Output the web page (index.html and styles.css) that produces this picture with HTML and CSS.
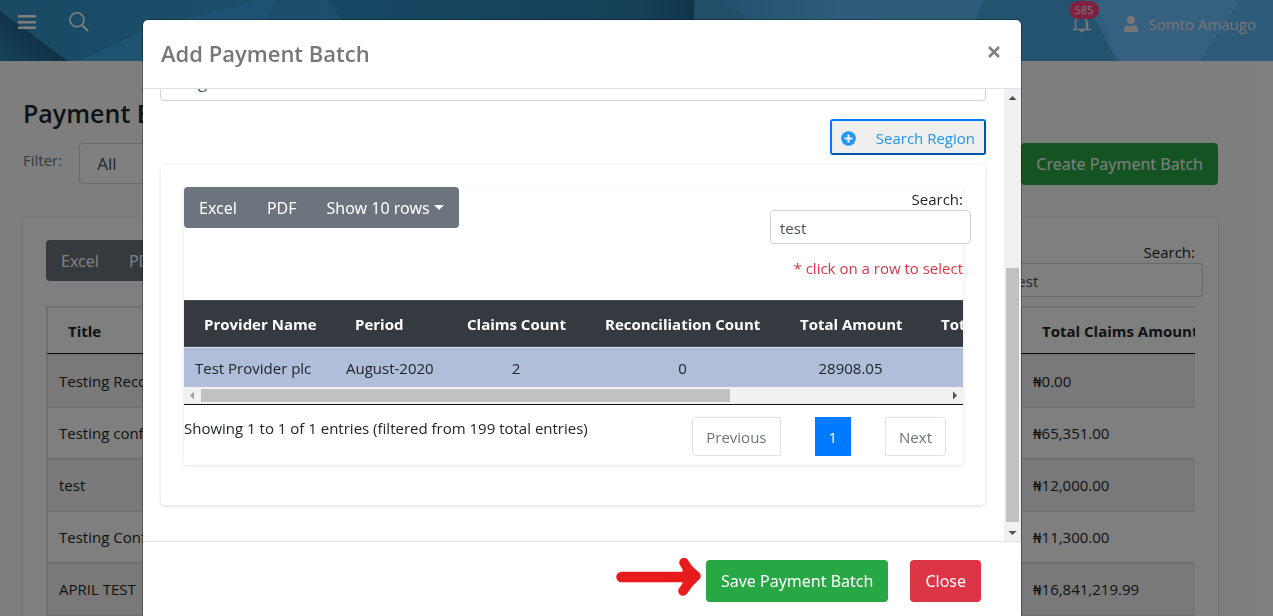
FILE: index.html
```html
<!DOCTYPE html>
<html lang="en">
<head>
<meta charset="utf-8">
<title>Payment Batch</title>
<link rel="stylesheet" href="styles.css">
</head>
<body>
<div class="page">
  <header class="topbar">
    <svg class="topbar-art" viewBox="0 0 1273 61" preserveAspectRatio="none" aria-hidden="true">
      <defs>
        <linearGradient id="base" x1="0" x2="1" y1="0" y2="0">
          <stop offset="0" stop-color="#3494c8"/><stop offset=".3" stop-color="#3aa2dc"/>
        </linearGradient>
        <linearGradient id="deep" x1="0" x2="1" y1="0" y2="0">
          <stop offset="0" stop-color="#308ec8"/><stop offset=".85" stop-color="#2a80b0"/><stop offset="1" stop-color="#226c98"/>
        </linearGradient>
        <linearGradient id="right" x1="0" x2="1" y1="0" y2="0">
          <stop offset="0" stop-color="#3f9cd8"/><stop offset=".25" stop-color="#5eb8f4"/><stop offset="1" stop-color="#62bcfa"/>
        </linearGradient>
        <linearGradient id="fold" gradientUnits="userSpaceOnUse" x1="10" y1="61" x2="36" y2="32">
          <stop offset="0" stop-color="#2a80b0"/><stop offset="1" stop-color="#22648c"/>
        </linearGradient>
      </defs>
      <rect width="1273" height="61" fill="url(#base)"/>
      <path d="M0 11L68 61H0z" fill="url(#fold)"/>
      <path d="M78 61L150 28 260 0H275L248 61z" fill="#3ba6e0"/>
      <path d="M328 0H695L693 61H371z" fill="url(#deep)"/>
      <path d="M695 0H1273V61H693z" fill="url(#right)"/>
      <path d="M720 0L765 30V61H693L695 0z" fill="#479fd6"/>
      <path d="M984 0H1085L1117 61H958z" fill="#48a6e0"/>
      <path d="M1095 0H1240L1199 61H1117z" fill="#6cc0ff"/>
      <path d="M1240 0H1273V61H1199z" fill="#5cb6f2"/>
    </svg>
    <div class="topbar-side">
      <button class="icon-btn" aria-label="Menu">
        <svg width="18" height="14" viewBox="0 0 18 14"><path d="M0 1.3h18M0 7.3h18M0 12.8h18" stroke="currentColor" stroke-width="2.4"/></svg>
      </button>
      <button class="icon-btn" aria-label="Search">
        <svg width="20" height="20" viewBox="0 0 20 20" fill="none" stroke="currentColor"><circle cx="8" cy="7.8" r="7" stroke-width="1.6"/><path d="M13 13l6 6" stroke-width="2"/></svg>
      </button>
    </div>
    <div class="topbar-side topbar-user">
      <button class="icon-btn bell" aria-label="Notifications">
        <svg width="18" height="20" viewBox="0 0 18 20"><path d="M0 15.500h18M2.500 15V8a5.500 5.500 0 0 1 11 0v7M14.500 15V8" fill="none" stroke="currentColor" stroke-width="1.5"/><path d="M6 16h6l-3 2.500z" fill="currentColor"/></svg>
        <span class="badge">585</span>
      </button>
      <a class="user" href="#">
        <svg width="14" height="16" viewBox="0 0 14 16" fill="currentColor"><circle cx="7" cy="4" r="4"/><path d="M0 16v-2.500A4.200 4.200 0 0 1 4 9.300Q7 10.300 10 9.300A4.200 4.200 0 0 1 14 13.500V16z"/></svg>
        Somto Amaugo
      </a>
    </div>
  </header>

  <main class="main">
    <h1>Payment Batch</h1>
    <div class="filter-row">
      <label for="filter">Filter:</label>
      <select id="filter" class="select filter-select"><option>All</option></select>
      <button class="btn btn-green create">Create Payment Batch</button>
    </div>
    <section class="card list-card">
      <div class="tools">
        <div class="btn-group"><button>Excel</button><button>PDF</button></div>
        <div class="search"><label for="list-search">Search:</label><input id="list-search" type="text" value="test"></div>
      </div>
      <div class="clip">
        <table class="list">
          <colgroup><col class="w-title"><col><col class="w-total"></colgroup>
          <thead><tr><th>Title</th><th></th><th>Total Claims Amount</th></tr></thead>
          <tbody>
            <tr><td>Testing Reco</td><td></td><td>₦0.00</td></tr>
            <tr><td>Testing conf</td><td></td><td>₦65,351.00</td></tr>
            <tr><td>test</td><td></td><td>₦12,000.00</td></tr>
            <tr><td>Testing Conf</td><td></td><td>₦11,300.00</td></tr>
            <tr><td>APRIL TEST</td><td></td><td>₦16,841,219.99</td></tr>
            <tr><td></td><td></td><td></td></tr>
          </tbody>
        </table>
      </div>
    </section>
  </main>
</div>

<div class="backdrop">
  <div class="modal" role="dialog" aria-labelledby="modal-title">
    <div class="modal-header">
      <h2 id="modal-title">Add Payment Batch</h2>
      <button class="close" aria-label="Close dialog">
        <svg width="12" height="12" viewBox="0 0 12 12"><path d="M1 1l10 10M11 1L1 11" stroke="currentColor" stroke-width="2.6"/></svg>
      </button>
    </div>
    <div class="modal-body">
      <div class="modal-content">
        <select class="select region" aria-label="Region"><option>Region</option></select>
        <button class="search-region">
          <svg width="15" height="15" viewBox="0 0 15 15"><circle cx="7.500" cy="7.500" r="7.300" fill="currentColor"/><path d="M7.500 3.500v8M3.500 7.500h8" stroke="#efefef" stroke-width="2.200"/></svg>
          Search Region
        </button>
        <section class="card provider-card">
          <div class="panel">
            <div class="tools">
              <div class="btn-group"><button>Excel</button><button>PDF</button><button>Show 10 rows <span class="caret"></span></button></div>
              <div class="search"><label for="p-search">Search:</label><input id="p-search" type="text" value="test"></div>
            </div>
            <p class="hint">* click on a row to select</p>
            <div class="clip">
              <table class="providers">
                <colgroup><col class="c1"><col class="c2"><col class="c3"><col class="c4"><col class="c5"><col class="c6"></colgroup>
                <thead><tr><th>Provider Name</th><th>Period</th><th>Claims Count</th><th>Reconciliation Count</th><th>Total Amount</th><th>Tot</th></tr></thead>
                <tbody><tr><td>Test Provider plc</td><td>August-2020</td><td class="num">2</td><td class="num">0</td><td class="num">28908.05</td><td></td></tr></tbody>
              </table>
            </div>
            <div class="hscroll" aria-hidden="true">
              <svg width="17" height="17"><path d="M6 8.500l4-4v8z" fill="#a3a3a3"/></svg>
              <div class="htrack"><div class="hthumb"></div></div>
              <svg width="17" height="17"><path d="M11 8.500l-4-4v8z" fill="#505050"/></svg>
            </div>
            <div class="panel-foot">
              <span class="info">Showing 1 to 1 of 1 entries (filtered from 199 total entries)</span>
              <nav class="pager"><button class="prev">Previous</button><button class="current">1</button><button class="next">Next</button></nav>
            </div>
          </div>
        </section>
      </div>
      <div class="vscroll" aria-hidden="true">
        <svg width="17" height="17"><path d="M8.500 7l4 4h-8z" fill="#505050"/></svg>
        <div class="vtrack"><div class="vthumb"></div></div>
        <svg width="17" height="17"><path d="M8.500 11l4-4h-8z" fill="#505050"/></svg>
      </div>
    </div>
    <div class="modal-footer">
      <svg class="arrow" width="85" height="40" viewBox="0 0 85 40" fill="none" stroke="#e81c1c" stroke-linecap="round" stroke-linejoin="round"><path d="M5.500 20H73" stroke-width="10.500"/><path d="M68 5.500Q71 12 80 19Q73 25 67 34" stroke-width="9.500"/><path d="M68 13l8 6.500-8 7z" fill="#e81c1c" stroke-width="3"/></svg>
      <button class="btn btn-green">Save Payment Batch</button>
      <button class="btn btn-red">Close</button>
    </div>
  </div>
</div>
</body>
</html>
```

FILE: styles.css
```css
* { box-sizing: border-box; }
html, body { height: 100%; }
body {
  margin: 0;
  overflow: hidden;
  font-family: "Open Sans", "Noto Sans", sans-serif;
  font-size: 15px;
  line-height: 20px;
  color: #212529;
  background: #fff;
}
button, input, select { font: inherit; color: inherit; margin: 0; }
button { cursor: pointer; }

/* page behind the dialog */
.page { height: 100%; overflow: hidden; }
.topbar {
  position: relative;
  display: flex;
  justify-content: space-between;
  height: 61px;
  color: #fff;
}
.topbar-art { position: absolute; inset: 0; width: 100%; height: 100%; }
.topbar-side {
  position: relative;
  display: flex;
  align-items: center;
  gap: 33px;
  height: 44px;
  padding: 0 18px;
}
.topbar-user { height: 48px; padding: 0 17px; color: #eee; }
.icon-btn { display: flex; padding: 0; border: 0; background: none; color: inherit; }
.bell { position: relative; }
.badge {
  position: absolute;
  bottom: 15px;
  left: -4px;
  padding: 0 6px;
  border-radius: 9px;
  background: #ff4081;
  font-size: 11px;
  line-height: 18px;
}
.user { display: flex; align-items: center; gap: 11px; color: inherit; text-decoration: none; }

.main { margin-right: 16px; padding: 36px 39px 0 23px; background: #fcfcfc; }
h1 { margin: 0; font-size: 25px; line-height: 32px; font-weight: 600; }
.filter-row { display: flex; align-items: flex-start; gap: 17px; margin-top: 14px; color: #6c757d; }
.filter-row label { line-height: 34px; }
.select {
  appearance: none;
  height: 41px;
  padding: 0 17px;
  border: 1px solid #ced4da;
  border-radius: 4px;
  background: #fff;
  color: #495057;
  font-size: 17px;
}
.filter-select { width: 200px; }
.btn {
  height: 42px;
  padding: 0 15px;
  border: 0;
  border-radius: 4px;
  color: #fff;
  font-family: "Noto Sans", sans-serif;
  font-size: 16px;
}
.btn-green { background: #28a745; }
.btn-red { background: #dc3545; }
.create { margin-left: auto; }
.card { border-radius: 4px; background: #fff; box-shadow: 0 1px 4px rgba(0, 0, 0, .15); }
.list-card { margin-top: 33px; padding: 22px 23px 0; }
.tools { display: flex; justify-content: space-between; align-items: flex-start; }
.btn-group { display: flex; border-radius: 4px; background: #6c757d; }
.btn-group button {
  height: 41px;
  padding: 0 15px;
  border: 0;
  background: none;
  color: #fff;
  font-family: "Noto Sans", sans-serif;
  font-size: 16px;
}
.caret {
  display: inline-block;
  margin-bottom: 4px;
  border: 5px solid transparent;
  border-top-color: #fff;
  border-bottom: 0;
}
.search { display: flex; flex-direction: column; align-items: flex-end; padding-top: 2px; }
.search input {
  width: 201px;
  height: 34px;
  margin: 1px -8px 0 0;
  padding: 2px 9px 0;
  border: 1px solid #ced4da;
  border-radius: 4px;
  background: #fff;
  color: #495057;
}
.clip { overflow: hidden; }
table { width: 100%; table-layout: fixed; border-collapse: separate; border-spacing: 0; }
th, td { padding: 0 11px; text-align: left; white-space: nowrap; }
th { padding-left: 20px; font-weight: 700; }
.list { margin-top: 9px; }
.list th { height: 48px; border-top: 2px solid #dee2e6; border-bottom: 1px solid #111; color: #212529; }
.list td { height: 52px; border-top: 2px solid #dee2e6; }
.list td, .list th { border-left: 2px solid #dee2e6; }
.list tbody tr:nth-child(odd) { background: #f2f2f2; }
.w-title { width: 160px; }
.w-total { width: 175px; }

/* dialog */
.backdrop {
  position: fixed;
  inset: 0;
  display: flex;
  padding: 20px 252px 0 143px;
  background: rgba(0, 0, 0, .5);
}
.modal {
  flex: 1;
  display: flex;
  flex-direction: column;
  min-width: 0;
  border-radius: 5px 5px 0 0;
  background: #fff;
  box-shadow: 0 0 0 1px rgba(0, 0, 0, .3);
  overflow: hidden;
}
.modal-header {
  display: flex;
  align-items: center;
  justify-content: space-between;
  height: 69px;
  padding: 0 21px 2px 18px;
  border-bottom: 1px solid #dee2e6;
}
.modal-header h2 { margin: 0; font-size: 22px; line-height: 30px; font-weight: 600; color: #777; }
.close { display: flex; padding: 0; border: 0; background: none; color: #7f7f7f; margin-bottom: 2px; }
.modal-body { flex: 1; display: flex; min-height: 0; }
.modal-content {
  flex: 1;
  display: flex;
  flex-direction: column;
  justify-content: flex-end;
  min-width: 0;
  padding: 0 18px 36px 17px;
  overflow: hidden;
}
.region { width: 100%; flex-shrink: 0; padding-top: 2px; color: #495057; }
.search-region {
  align-self: flex-end;
  flex-shrink: 0;
  display: flex;
  align-items: center;
  gap: 20px;
  height: 36px;
  margin-top: 18px;
  padding: 2px 9px 0;
  border: 2px outset #007bff;
  border-radius: 3px;
  background: #efefef;
  color: #2196f3;
}
.provider-card { flex-shrink: 0; margin: 10px 1px 0; padding: 22px 22px 40px 23px; }
.panel { box-shadow: 0 1px 4px rgba(0, 0, 0, .1); }
.hint { margin: 14px 0 22px; color: #dc3545; text-align: right; }
.providers th {
  height: 47px;
  border-top: 1px solid #454d55;
  border-bottom: 1px solid #454d55;
  background: #343a40;
  color: #fff;
}
.providers td { height: 40px; border-top: 1px solid #dee2e6; background: #b0bed9; }
.providers .num { text-align: center; }
.c1 { width: 151px; }
.c2 { width: 112px; }
.c3 { width: 138px; }
.c4 { width: 195px; }
.c5 { width: 141px; }
.hscroll { display: flex; background: #f1f1f1; border-bottom: 1px solid #111; }
.hscroll svg, .vscroll svg { display: block; flex: none; }
.htrack { flex: 1; padding: 2px 0; }
.hthumb { width: 71%; height: 13px; background: #c1c1c1; }
.panel-foot { display: flex; justify-content: space-between; padding: 12px 17px 9px 0; }
.info { line-height: 22px; }
.pager { display: flex; gap: 34px; }
.pager button {
  height: 39px;
  padding: 0 13px;
  border: 1px solid #dee2e6;
  background: #fff;
  color: #6c757d;
}
.pager .prev { border-radius: 4px 0 0 4px; }
.pager .next { border-radius: 0 4px 4px 0; }
.pager .current { border-color: #007bff; background: #007bff; color: #fff; }
.vscroll { display: flex; flex-direction: column; width: 17px; background: #f1f1f1; }
.vtrack { flex: 1; display: flex; align-items: flex-end; padding: 0 2px 2px; }
.vthumb { width: 100%; height: 61%; background: #c1c1c1; }
.modal-footer {
  display: flex;
  align-items: flex-start;
  justify-content: flex-end;
  gap: 22px;
  height: 75px;
  padding: 18px 40px 0 0;
  border-top: 1px solid #dee2e6;
}
.arrow { margin: -3px -17px 0 0; }
```
